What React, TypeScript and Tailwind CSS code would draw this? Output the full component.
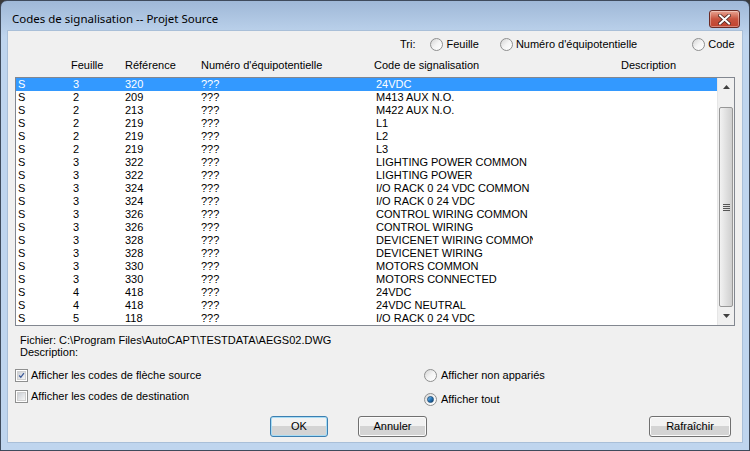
import React from 'react';

type Row = { sheet: string; ref: string; code: string };

const rows: Row[] = [
  { sheet: '3', ref: '320', code: '24VDC' },
  { sheet: '2', ref: '209', code: 'M413 AUX N.O.' },
  { sheet: '2', ref: '213', code: 'M422 AUX N.O.' },
  { sheet: '2', ref: '219', code: 'L1' },
  { sheet: '2', ref: '219', code: 'L2' },
  { sheet: '2', ref: '219', code: 'L3' },
  { sheet: '3', ref: '322', code: 'LIGHTING POWER COMMON' },
  { sheet: '3', ref: '322', code: 'LIGHTING POWER' },
  { sheet: '3', ref: '324', code: 'I/O RACK 0 24 VDC COMMON' },
  { sheet: '3', ref: '324', code: 'I/O RACK 0 24 VDC' },
  { sheet: '3', ref: '326', code: 'CONTROL WIRING COMMON' },
  { sheet: '3', ref: '326', code: 'CONTROL WIRING' },
  { sheet: '3', ref: '328', code: 'DEVICENET WIRING COMMON' },
  { sheet: '3', ref: '328', code: 'DEVICENET WIRING' },
  { sheet: '3', ref: '330', code: 'MOTORS COMMON' },
  { sheet: '3', ref: '330', code: 'MOTORS CONNECTED' },
  { sheet: '4', ref: '418', code: '24VDC' },
  { sheet: '4', ref: '418', code: '24VDC NEUTRAL' },
  { sheet: '5', ref: '118', code: 'I/O RACK 0 24 VDC' },
];

function Radio({ checked = false }: { checked?: boolean }) {
  return (
    <span className="flex h-[13px] w-[13px] shrink-0 items-center justify-center rounded-full border border-[#8e8f8f] bg-gradient-to-br from-[#d4d4d4] via-[#f4f4f4] to-white">
      {checked && (
        <span className="h-[7px] w-[7px] rounded-full border border-[#1f4f7a] bg-gradient-to-br from-[#7fc3f0] via-[#2a7cc0] to-[#0d3f6e]" />
      )}
    </span>
  );
}

function Check({ checked = false }: { checked?: boolean }) {
  return (
    <span className="flex h-[13px] w-[13px] shrink-0 items-center justify-center border border-[#8e8f8f] bg-white">
      <span className="flex h-[9px] w-[9px] items-center justify-center border border-[#d0d0d0] bg-gradient-to-br from-[#cbcfd5] to-[#f6f6f6]">
        {checked && (
          <svg width="9" height="9" viewBox="0 0 9 9">
            <path d="M1.5 4.5 L3.6 6.8 L7.6 1.4" fill="none" stroke="#3d5a98" strokeWidth="1.6" />
          </svg>
        )}
      </span>
    </span>
  );
}

function Button({ label, w, focused = false }: { label: string; w: string; focused?: boolean }) {
  return (
    <div
      className={`flex h-[21px] ${w} items-center justify-center rounded-[3px] border ${
        focused ? 'border-[#3c7fb1] shadow-[inset_0_0_0_1px_#a8dcf4]' : 'border-[#707070] shadow-[inset_0_0_0_1px_#fbfbfb]'
      } bg-gradient-to-b from-[#f2f2f2] from-50% to-[#d4d4d4] to-50% text-black`}
    >
      {label}
    </div>
  );
}

export default function App() {
  return (
    <div className="h-[451px] w-[750px] bg-[#3a3a3a]">
      <div className="flex h-[451px] w-[750px] flex-col rounded-t-[7px] border border-[#3f4b5c] bg-gradient-to-b from-[#9fb8d7] from-0% to-[#bfd5ee] to-[8%] font-['Liberation_Sans',Arial,sans-serif] text-[11px] leading-[13px] text-black">
        {/* Title bar */}
        <div className="flex h-[29px] items-start justify-between pl-[11px] pr-[9px]">
          <span className="mt-[10px] font-['Noto_Sans',sans-serif] text-[11.5px] leading-[16px] text-black">
            Codes de signalisation -- Projet Source
          </span>
          <div className="mt-[9px] flex h-[18px] w-[31px] items-center justify-center rounded-[3px] border border-[#6b2a24] bg-gradient-to-b from-[#e8a493] from-0% via-[#c7533f] via-50% to-[#c2432e] to-100% shadow-[inset_0_0_0_1px_rgba(255,255,255,0.35)]">
            <svg width="13" height="11" viewBox="0 0 13 11">
              <path d="M2 1.5 L11 9.5 M11 1.5 L2 9.5" stroke="#4a2520" strokeWidth="3.6" strokeLinecap="square" />
              <path d="M2 1.5 L11 9.5 M11 1.5 L2 9.5" stroke="#ffffff" strokeWidth="2" strokeLinecap="square" />
            </svg>
          </div>
        </div>

        {/* Client area */}
        <div className="mx-[6px] h-[413px] border border-[#a9bfd8] bg-[#f0f0f0]">
          {/* Sort options */}
          <div className="mt-[6px] flex h-[14px] items-center">
            <span className="ml-[392px]">Tri:</span>
            <span className="ml-[15px] flex items-center gap-[3px]">
              <Radio />
              <span>Feuille</span>
            </span>
            <span className="ml-[21px] flex items-center gap-[3px]">
              <Radio />
              <span>Numéro d'équipotentielle</span>
            </span>
            <span className="ml-[55px] flex items-center gap-[3px]">
              <Radio />
              <span>Code</span>
            </span>
          </div>

          {/* Column headers */}
          <div className="mt-[8px] flex h-[13px] pl-[63px]">
            <span className="w-[54px]">Feuille</span>
            <span className="w-[76px]">Référence</span>
            <span className="w-[173px]">Numéro d'équipotentielle</span>
            <span className="w-[247px]">Code de signalisation</span>
            <span>Description</span>
          </div>

          {/* List */}
          <div className="ml-[7px] mt-[5px] flex h-[249px] w-[720px] border border-[#828790] bg-white">
            <div className="flex-1 overflow-hidden">
              {rows.map((r, i) => (
                <div
                  key={i}
                  className={`flex h-[13px] ${i === 0 ? 'bg-[#3399ff] text-white' : 'text-black'}`}
                >
                  <span className="w-[57px] pl-[2px]">S</span>
                  <span className="w-[52px]">{r.sheet}</span>
                  <span className="w-[76px]">{r.ref}</span>
                  <span className="w-[175px]">???</span>
                  <span className="w-[157px] overflow-hidden whitespace-nowrap">{r.code}</span>
                </div>
              ))}
            </div>
            {/* Scrollbar */}
            <div className="flex w-[17px] flex-col border-l border-[#e6e6e6] bg-[#f0f0f0]">
              <div className="flex h-[17px] items-center justify-center">
                <svg width="7" height="4" viewBox="0 0 7 4">
                  <path d="M0 4 L3.5 0 L7 4 Z" fill="#404040" />
                </svg>
              </div>
              <div className="h-[12px]" />
              <div className="mx-[1px] flex h-[200px] items-center justify-center rounded-[2px] border border-[#979797] bg-gradient-to-r from-[#f2f2f2] to-[#cfcfcf]">
                <div className="flex flex-col gap-[1px]">
                  <span className="h-[1px] w-[7px] bg-[#555]" />
                  <span className="h-[1px] w-[7px] bg-[#555]" />
                  <span className="h-[1px] w-[7px] bg-[#555]" />
                  <span className="h-[1px] w-[7px] bg-[#555]" />
                </div>
              </div>
              <div className="flex flex-1 items-center justify-center">
                <svg width="7" height="4" viewBox="0 0 7 4">
                  <path d="M0 0 L3.5 4 L7 0 Z" fill="#404040" />
                </svg>
              </div>
            </div>
          </div>

          {/* File info */}
          <div className="ml-[12px] mt-[8px] leading-[12px]">
            <div>Fichier: C:\Program Files\AutoCAPT\TESTDATA\AEGS02.DWG</div>
            <div>Description:</div>
          </div>

          {/* Options */}
          <div className="mt-[11px] flex">
            <div className="ml-[7px] flex w-[409px] flex-col gap-[8px]">
              <label className="flex h-[13px] items-center gap-[3px]">
                <Check checked />
                <span>Afficher les codes de flèche source</span>
              </label>
              <label className="flex h-[13px] items-center gap-[3px]">
                <Check />
                <span>Afficher les codes de destination</span>
              </label>
            </div>
            <div className="flex flex-col gap-[11px]">
              <label className="flex h-[13px] items-center gap-[4px]">
                <Radio />
                <span>Afficher non appariés</span>
              </label>
              <label className="flex h-[13px] items-center gap-[4px]">
                <Radio checked />
                <span>Afficher tout</span>
              </label>
            </div>
          </div>

          {/* Buttons */}
          <div className="mt-[10px] flex">
            <div className="ml-[262px]">
              <Button label="OK" w="w-[58px]" focused />
            </div>
            <div className="ml-[30px]">
              <Button label="Annuler" w="w-[69px]" />
            </div>
            <div className="ml-[222px]">
              <Button label="Rafraîchir" w="w-[82px]" />
            </div>
          </div>
        </div>
      </div>
    </div>
  );
}
